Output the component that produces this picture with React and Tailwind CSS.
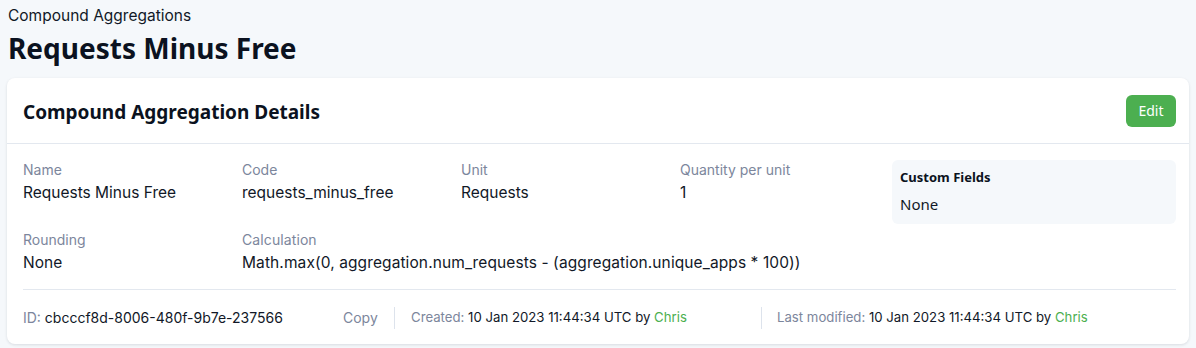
import React from 'react';

const Field = ({ label, value, className = 'w-[219px] shrink-0' }) => (
  <div className={className}>
    <div className="text-[14px] leading-[20px] text-[#7c869c]">{label}</div>
    <div className="mt-[2px] text-[15.5px] leading-[22px] text-[#111827]">{value}</div>
  </div>
);

const App = () => {
  return (
    <div className="min-h-[348px] w-[1196px] bg-[#f5f8fb] font-['Inter','Noto_Sans',sans-serif] text-[#0f172a]">
      <div className="px-[7px] pt-[6px]">
        <div className="pl-[1px] text-[15.5px] leading-[20px] text-[#111827]">Compound Aggregations</div>
        <h1 className="mt-[4px] pl-[1px] font-['Noto_Sans',sans-serif] text-[28px] font-bold leading-[36px] text-[#0b1220]">
          Requests Minus Free
        </h1>

        <div className="mt-[12px] rounded-lg bg-white shadow-[0_1px_3px_rgba(15,23,42,0.12)]">
          {/* header */}
          <div className="flex h-[66px] items-center justify-between border-b border-[#e3e8ef] pl-4 pr-[13px]">
            <h2 className="pt-[4px] font-['Noto_Sans',sans-serif] text-[19px] font-bold text-[#0b1220]">
              Compound Aggregation Details
            </h2>
            <button className="h-[32px] w-[50px] rounded-md bg-[#4caf50] font-['Noto_Sans',sans-serif] text-[14px] text-white">
              Edit
            </button>
          </div>

          {/* body */}
          <div className="pl-4 pr-[13px] pt-[16px]">
            <div className="flex">
              <div className="min-w-0 flex-1">
                <div className="flex">
                  <Field label="Name" value="Requests Minus Free" />
                  <Field label="Code" value="requests_minus_free" />
                  <Field label="Unit" value="Requests" />
                  <Field label="Quantity per unit" value="1" className="min-w-0 flex-1" />
                </div>
                <div className="mt-[26px] flex">
                  <Field label="Rounding" value="None" />
                  <Field
                    label="Calculation"
                    value="Math.max(0, aggregation.num_requests - (aggregation.unique_apps * 100))"
                    className="flex-1 tracking-[0.1px]"
                  />
                </div>
              </div>
              <div className="h-[64px] w-[284px] shrink-0 self-start rounded-md bg-[#f5f8fb] px-[8px] pt-[8px] font-['Noto_Sans',sans-serif]">
                <div className="text-[13px] font-bold leading-[18px] text-[#0b1220]">Custom Fields</div>
                <div className="mt-[8px] text-[15px] leading-[20px] text-[#111827]">None</div>
              </div>
            </div>

            <div className="mt-[15px] flex h-[55px] items-center border-t border-[#e3e8ef] pt-[1px] text-[14px]">
              <div className="w-[320px] shrink-0">
                <span className="text-[#7c869c]">ID: </span>
                <span className="text-[#111827]">cbcccf8d-8006-480f-9b7e-237566</span>
              </div>
              <div className="w-[51px] shrink-0 text-[#7c869c]">Copy</div>
              <div className="flex h-[22px] w-[367px] shrink-0 items-center border-l border-[#dde3ec] pl-[16px] text-[13.2px]">
                <span className="text-[#7c869c]">Created:&nbsp;</span>
                <span className="text-[#111827]">10 Jan 2023 11:44:34 UTC by&nbsp;</span>
                <span className="text-[#4caf50]">Chris</span>
              </div>
              <div className="flex h-[22px] items-center border-l border-[#dde3ec] pl-[15px] text-[13.2px]">
                <span className="text-[#7c869c]">Last modified:&nbsp;</span>
                <span className="text-[#111827]">10 Jan 2023 11:44:34 UTC by&nbsp;</span>
                <span className="text-[#4caf50]">Chris</span>
              </div>
            </div>
          </div>
        </div>
      </div>
    </div>
  );
};

export default App;
